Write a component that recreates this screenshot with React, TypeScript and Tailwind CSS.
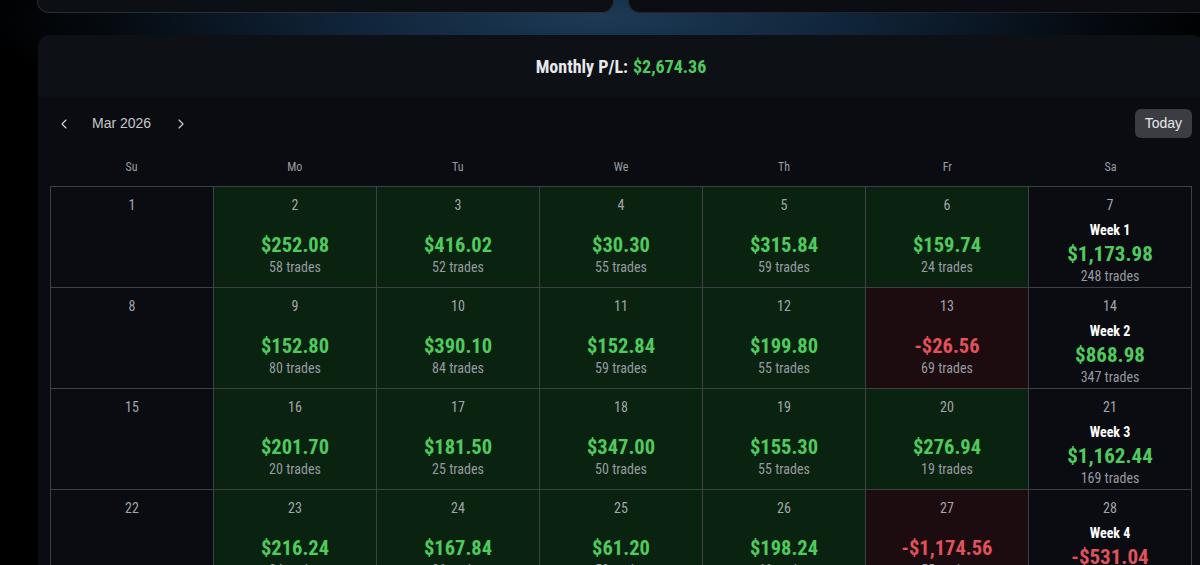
import { ChevronLeft, ChevronRight } from "lucide-react";
import { Fragment } from "react";

type Day = { d: number; pl?: number; trades?: number };
type Week = { days: Day[]; label: string; sat: number; total: number; trades: number };

const fmt = (v: number) => {
  const s = Math.abs(v).toLocaleString("en-US", { minimumFractionDigits: 2, maximumFractionDigits: 2 });
  return (v < 0 ? "-$" : "$") + s;
};

const weeks: Week[] = [
  {
    label: "Week 1",
    sat: 7,
    total: 1173.98,
    trades: 248,
    days: [
      { d: 1 },
      { d: 2, pl: 252.08, trades: 58 },
      { d: 3, pl: 416.02, trades: 52 },
      { d: 4, pl: 30.3, trades: 55 },
      { d: 5, pl: 315.84, trades: 59 },
      { d: 6, pl: 159.74, trades: 24 },
    ],
  },
  {
    label: "Week 2",
    sat: 14,
    total: 868.98,
    trades: 347,
    days: [
      { d: 8 },
      { d: 9, pl: 152.8, trades: 80 },
      { d: 10, pl: 390.1, trades: 84 },
      { d: 11, pl: 152.84, trades: 59 },
      { d: 12, pl: 199.8, trades: 55 },
      { d: 13, pl: -26.56, trades: 69 },
    ],
  },
  {
    label: "Week 3",
    sat: 21,
    total: 1162.44,
    trades: 169,
    days: [
      { d: 15 },
      { d: 16, pl: 201.7, trades: 20 },
      { d: 17, pl: 181.5, trades: 25 },
      { d: 18, pl: 347.0, trades: 50 },
      { d: 19, pl: 155.3, trades: 55 },
      { d: 20, pl: 276.94, trades: 19 },
    ],
  },
  {
    label: "Week 4",
    sat: 28,
    total: -531.04,
    trades: 223,
    days: [
      { d: 22 },
      { d: 23, pl: 216.24, trades: 34 },
      { d: 24, pl: 167.84, trades: 36 },
      { d: 25, pl: 61.2, trades: 52 },
      { d: 26, pl: 198.24, trades: 46 },
      { d: 27, pl: -1174.56, trades: 55 },
    ],
  },
];

function DayCell({ day }: { day: Day }) {
  const has = day.pl !== undefined;
  const neg = has && (day.pl as number) < 0;
  const bg = !has ? "bg-[#0a0c11]" : neg ? "bg-[#1d0c0f]" : "bg-[#0a2311]";
  return (
    <div className={`${bg} flex h-[101px] flex-col items-center border-r border-b border-[#3d4045] pt-[9px]`}>
      <div className="text-[14px] leading-[18px] text-[#a2a6ab]">{day.d}</div>
      {has && (
        <>
          <div
            className={`mt-[18px] text-[20.5px] leading-[26px] font-bold ${neg ? "text-[#e0525c]" : "text-[#4fcb5e]"}`}
          >
            {fmt(day.pl as number)}
          </div>
          <div className="text-[14px] leading-[18px] text-[#969aa0]">{day.trades} trades</div>
        </>
      )}
    </div>
  );
}

function WeekCell({ w }: { w: Week }) {
  const neg = w.total < 0;
  return (
    <div className="flex h-[101px] flex-col items-center border-r border-b border-[#3d4045] bg-[#0a0c11] pt-[9px]">
      <div className="text-[14px] leading-[18px] text-[#a2a6ab]">{w.sat}</div>
      <div className="mt-[7px] text-[14px] leading-[18px] font-bold text-white">{w.label}</div>
      <div className={`mt-[2px] text-[21px] leading-[26px] font-bold ${neg ? "text-[#e0525c]" : "text-[#4fcb5e]"}`}>
        {fmt(w.total)}
      </div>
      <div className="text-[14px] leading-[18px] text-[#969aa0]">{w.trades} trades</div>
    </div>
  );
}

export default function App() {
  const heads = ["Su", "Mo", "Tu", "We", "Th", "Fr", "Sa"];
  return (
    <div className="h-[565px] w-[1200px] overflow-hidden bg-black bg-[radial-gradient(ellipse_620px_120px_at_600px_18px,#1d3a56_0%,#10253a_40%,#050a10_80%,#000_100%)] font-['Roboto_Condensed',Roboto,sans-serif]">
      <div className="w-[1220px] pl-[37px]">
        <div className="flex h-[13px] gap-[14px]">
          <div className="h-[13px] w-[577px] rounded-b-xl border border-t-0 border-[#2a2e35] bg-[#0c0f14]" />
          <div className="h-[13px] flex-1 rounded-b-xl border border-t-0 border-[#22262c] bg-[#0b0d12]" />
        </div>
        <div className="mt-[22px] ml-px w-[1166px] overflow-hidden rounded-xl bg-[#0a0c11]">
          <div className="flex h-[62px] items-center justify-center bg-[#0d1015] text-[18px] font-bold">
            <span className="text-[#e8e9eb]">Monthly P/L:</span>
            <span className="ml-[5px] text-[#4fcb5e]">$2,674.36</span>
          </div>
          <div className="px-[12px] pt-[12px]">
            <div className="flex h-[29px] items-center justify-between font-['Liberation_Sans',Arial,sans-serif]">
              <div className="flex items-center">
                <button className="flex h-[24px] w-[28px] items-center justify-center text-[#cdd0d4]">
                  <ChevronLeft size={16} strokeWidth={1.75} />
                </button>
                <span className="ml-[14px] text-[14px] text-[#c4c7cb]">Mar 2026</span>
                <button className="ml-[18px] flex h-[24px] w-[24px] items-center justify-center text-[#cdd0d4]">
                  <ChevronRight size={16} strokeWidth={1.75} />
                </button>
              </div>
              <button className="h-[29px] rounded-md bg-[#3b3d42] px-[10px] text-[14px] text-[#e6e7e9]">Today</button>
            </div>
            <div className="mt-[10px] grid h-[38px] grid-cols-7 items-center text-center text-[12px] text-[#9a9ea4]">
              {heads.map((h) => (
                <div key={h}>{h}</div>
              ))}
            </div>
            <div className="grid grid-cols-7 border-t border-l border-[#3d4045]">
              {weeks.map((w) => (
                <Fragment key={w.label}>
                  {w.days.map((d) => (
                    <DayCell key={d.d} day={d} />
                  ))}
                  <WeekCell w={w} />
                </Fragment>
              ))}
            </div>
          </div>
        </div>
      </div>
    </div>
  );
}
